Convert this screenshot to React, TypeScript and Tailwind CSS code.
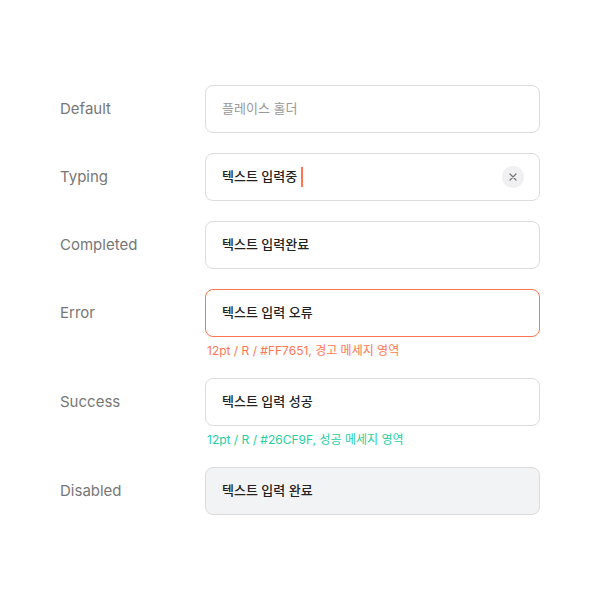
const font = {
  fontFamily: 'Inter, "Noto Sans CJK KR", sans-serif',
};

const Row = ({
  label,
  children,
  message,
  messageClass,
}: {
  label: string;
  children: React.ReactNode;
  message?: string;
  messageClass?: string;
}) => (
  <div className="flex">
    <div className="w-[145px] h-12 flex items-center text-[15px] text-[#777]">
      {label}
    </div>
    <div className="w-[335px]">
      {children}
      {message && (
        <div className={`mt-[6px] ml-0.5 text-xs leading-[15px] ${messageClass}`}>
          {message}
        </div>
      )}
    </div>
  </div>
);

const Box = ({
  className,
  children,
}: {
  className?: string;
  children: React.ReactNode;
}) => (
  <div
    className={`h-12 rounded-lg border flex items-center px-4 text-[13px] ${className}`}
  >
    {children}
  </div>
);

export default function App() {
  return (
    <div className="w-[600px] h-[600px] bg-white pl-[60px] pt-[85px]" style={font}>
      <div className="flex flex-col gap-5">
        <Row label="Default">
          <Box className="border-[#dcdcdc] bg-white text-[#999]">플레이스 홀더</Box>
        </Row>
        <Row label="Typing">
          <Box className="border-[#dcdcdc] bg-white font-medium text-[#222]">
            <span>텍스트 입력중</span>
            <span className="block ml-[4px] w-[1.5px] h-5 bg-[#ff7651]" />
            <span className="ml-auto -mr-px w-[22px] h-[22px] rounded-full bg-[#f0f0f2] flex items-center justify-center">
              <svg width="8" height="8" viewBox="0 0 8 8">
                <path d="M1 1L7 7M7 1L1 7" stroke="#777" strokeWidth="1.2" strokeLinecap="round" />
              </svg>
            </span>
          </Box>
        </Row>
        <Row label="Completed">
          <Box className="border-[#dcdcdc] bg-white font-medium text-[#222]">텍스트 입력완료</Box>
        </Row>
        <Row
          label="Error"
          message="12pt / R / #FF7651, 경고 메세지 영역"
          messageClass="text-[#ff7651]"
        >
          <Box className="border-[#ff7651] bg-white font-medium text-[#222]">텍스트 입력 오류</Box>
        </Row>
        <Row
          label="Success"
          message="12pt / R / #26CF9F, 성공 메세지 영역"
          messageClass="text-[#26cf9f]"
        >
          <Box className="border-[#dcdcdc] bg-white font-medium text-[#222]">텍스트 입력 성공</Box>
        </Row>
        <Row label="Disabled">
          <Box className="border-[#dcdcdc] bg-[#f2f3f5] font-medium text-[#222]">텍스트 입력 완료</Box>
        </Row>
      </div>
    </div>
  );
}
